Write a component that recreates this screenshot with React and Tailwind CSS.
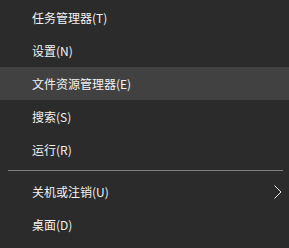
import React from "react";

const items1 = [
  { label: "任务管理器(T)" },
  { label: "设置(N)" },
  { label: "文件资源管理器(E)", active: true },
  { label: "搜索(S)" },
  { label: "运行(R)" },
];

function Row({ label, active, arrow }) {
  return (
    <div
      className={
        "h-[33px] flex items-center justify-between pl-[32px] pr-[7px] text-[12px] text-[#f2f2f2] " +
        (active ? "bg-[#414141]" : "")
      }
    >
      <span>{label}</span>
      {arrow && (
        <svg width="8" height="14" viewBox="0 0 8 14" fill="none">
          <polyline points="0.5,0.5 7,7 0.5,13.5" stroke="#e8e8e8" strokeWidth="1" />
        </svg>
      )}
    </div>
  );
}

export default function App() {
  return (
    <div
      className="w-[289px] h-[248px] bg-[#2b2b2b] pt-[1px] overflow-hidden"
      style={{ fontFamily: '"Microsoft YaHei", "Noto Sans CJK SC", sans-serif' }}
    >
      {items1.map((it) => (
        <Row key={it.label} {...it} />
      ))}
      <div className="ml-[8px] mr-[6px] mt-[4px] mb-[4px] h-px bg-[#7f7f7f]" />
      <Row label="关机或注销(U)" arrow />
      <Row label="桌面(D)" />
    </div>
  );
}
